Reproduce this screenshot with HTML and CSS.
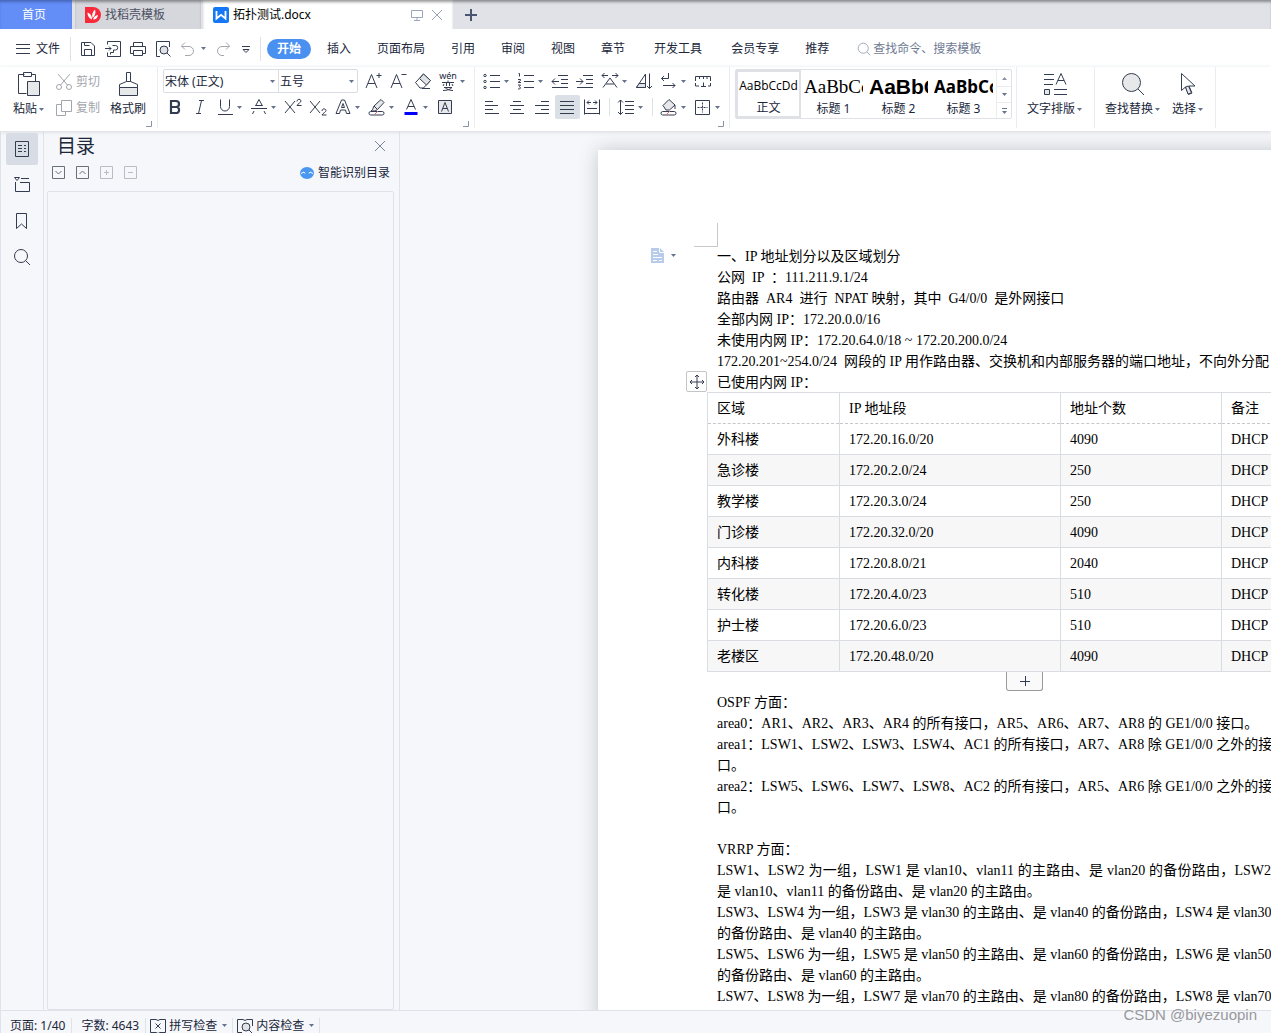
FILE: index.html
```html
<!DOCTYPE html>
<html lang="zh-CN">
<head>
<meta charset="utf-8">
<title>拓扑测试.docx</title>
<link rel="stylesheet" href="styles.css">
</head>
<body>
<svg class="sprite" aria-hidden="true">
  <symbol id="caret" viewBox="0 0 5 3"><path d="M0 0h5L2.500 3z" fill="#65728e"/></symbol>
  <symbol id="caret-up" viewBox="0 0 5 3"><path d="M0 3h5L2.500 0z" fill="#8a92a3"/></symbol>
  <symbol id="close" viewBox="0 0 12 12"><path d="M1 1l10 10M11 1L1 11"/></symbol>
  <symbol id="search" viewBox="0 0 18 18"><circle cx="8" cy="8" r="6.5"/><path d="M12.7 12.7L17 17"/></symbol>
  <symbol id="corner" viewBox="0 0 6 6"><path d="M5.500 0v5.500H0"/></symbol>
</svg>

<header class="tabs">
  <button class="tab tab-home">首页</button>
  <button class="tab tab-template">
    <svg class="i16" viewBox="0 0 16 16"><path d="M0 0h8a8 8 0 0 1 0 16H0z" fill="#f8293a"/><path d="M7 12.500C3.500 11 2.500 8.500 2.500 5.500 5.500 6.500 7 9 7 12.500zM7.500 11C6.500 7.500 7.800 4.500 10 2.500 11.200 6 10 9 7.500 11zM8 12.500c1-3 2.500-4 5-4.500-.5 3-2 4.500-5 4.500z" fill="#fff"/></svg>
    找稻壳模板
  </button>
  <div class="tab tab-doc">
    <svg class="i16" viewBox="0 0 16 16"><rect width="16" height="16" rx="2" fill="#1677f5"/><path d="M3.500 4v7.500L8 7.800l4.500 3.700V4" fill="none" stroke="#fff" stroke-width="1.800"/></svg>
    <span class="tab-name">拓扑测试.docx</span>
    <button class="bare" aria-label="窗口"><svg class="i12 pale" viewBox="0 0 12 12"><path d="M.5 1.500h11v7H.5zM6 8.500v3M3 11.500h6"/></svg></button>
    <button class="bare" aria-label="关闭"><svg class="i12 pale"><use href="#close"/></svg></button>
  </div>
  <button class="bare tab-add" aria-label="新建"><svg class="i12" viewBox="0 0 12 12"><path d="M6 0v12M0 6h12" stroke="#4a5572" stroke-width="2"/></svg></button>
</header>

<nav class="menu">
  <button class="bare file"><svg class="i14" viewBox="0 0 14 14"><path d="M0 2.500h14M0 6.500h14M0 11.500h14"/></svg>文件</button>
  <div class="quick">
    <button class="bare" aria-label="保存"><svg class="i16" viewBox="0 0 16 16"><path d="M1.500 14.500v-13h9.500l3.500 3.500v9.500zM4.500 14.500v-6h7v6M4.500 1.500v3h5"/></svg></button>
    <button class="bare" aria-label="输出为PDF"><svg class="i16" viewBox="0 0 16 16"><path d="M2.500 3.500v-3h13v15h-13v-4M0 7.500h6M4 5.500l2 2-2 2M7.500 4.500h3a2 2 0 0 1 0 4.500H8.500v2.500H5.500v2"/></svg></button>
    <button class="bare" aria-label="打印"><svg class="i16" viewBox="0 0 16 16"><path d="M3.500 5.500v-4h9v4M3.500 12.500h-3v-7h15v7h-3M3.500 9.500h9v5h-9z"/></svg></button>
    <button class="bare" aria-label="打印预览"><svg class="i16" viewBox="0 0 16 16"><path d="M5 15.500H1.500v-15h13V6"/><circle cx="9" cy="9" r="4" fill="#dfe3e6"/><path d="M12 12l3.500 3.500"/></svg></button>
    <button class="bare faded drop" aria-label="撤销"><svg class="i16" viewBox="0 0 16 16"><path d="M5 1.500L1.500 5 5 8.500M1.500 5.500H9a4.500 4.500 0 0 1 0 9H5"/></svg><svg class="caret"><use href="#caret"/></svg></button>
    <button class="bare faded" aria-label="恢复"><svg class="i16" viewBox="0 0 16 16"><path d="M11 1.500L14.500 5 11 8.500M14.500 5.500H7a4.500 4.500 0 0 0 0 9h2"/></svg></button>
    <button class="bare" aria-label="自定义"><svg class="i12" viewBox="0 0 12 12"><path d="M2 3.500h8M3 6.500l3 3 3-3z"/></svg></button>
  </div>
  <div class="menu-items">
    <button class="bare active">开始</button>
    <button class="bare">插入</button>
    <button class="bare">页面布局</button>
    <button class="bare">引用</button>
    <button class="bare">审阅</button>
    <button class="bare">视图</button>
    <button class="bare">章节</button>
    <button class="bare wide">开发工具</button>
    <button class="bare wide">会员专享</button>
    <button class="bare">推荐</button>
  </div>
  <button class="bare find"><svg class="i14"><use href="#search"/></svg>查找命令、搜索模板</button>
</nav>

<section class="ribbon">
  <div class="group clip">
    <button class="bare big"><svg class="i24" viewBox="0 0 24 24"><path d="M7.500 2.500h-6v19h8M14.500 2.500h4v7M6.500.5h8v4h-8z"/><path d="M10.500 9.500h12v14h-12z" fill="#e6e8ea"/></svg><span>粘贴<svg class="caret"><use href="#caret"/></svg></span></button>
    <div class="clip-pair">
      <button class="bare faded"><svg class="i16" viewBox="0 0 16 16"><path d="M2 0l9.500 11M14 0L4.500 11"/><circle cx="3" cy="13" r="2.500"/><circle cx="13" cy="13" r="2.500"/></svg>剪切</button>
      <button class="bare faded"><svg class="i16" viewBox="0 0 16 16"><path d="M5.500.5h10v11h-10zM5.500 4.500h-5v11h9v-4"/></svg>复制</button>
    </div>
    <button class="bare big"><svg class="i24" viewBox="0 0 24 24"><path d="M10.500.5h4v9h-4zM10.500 9.500l-7 3v3h18v-3l-7-3"/><path d="M3.500 15.500h18v8h-18z" fill="#e6e8ea"/></svg><span>格式刷</span></button>
    <svg class="corner"><use href="#corner"/></svg>
  </div>

  <div class="group font">
    <div class="row">
      <div class="combo">
        <label class="pick face"><select aria-label="字体"><option>宋体 (正文)</option></select><svg class="caret"><use href="#caret"/></svg></label>
        <label class="pick"><select aria-label="字号"><option>五号</option></select><svg class="caret"><use href="#caret"/></svg></label>
      </div>
      <button class="tool" aria-label="增大字号"><svg class="i18" viewBox="0 0 18 18"><path d="M2 16L7.500 2.500 13 16M4 11.500h7M12.500 3.500h5M15 1v5"/></svg></button>
      <button class="tool" aria-label="减小字号"><svg class="i18" viewBox="0 0 18 18"><path d="M2 16L7.500 2.500 13 16M4 11.500h7M12.500 2.500h5"/></svg></button>
      <button class="tool" aria-label="清除格式"><svg class="i18" viewBox="0 0 18 18"><path d="M1.500 10.500L9.500 2l7 6.500-7 7.500H6z"/><path d="M5.500 6.500l7 6.500 4-4.500-7-6.500z" fill="#dfe3e6"/><path d="M8 16.500h8"/></svg></button>
      <button class="tool drop" aria-label="拼音指南"><span class="pinyin"><span>wén</span><svg viewBox="0 0 14 11"><path d="M1 2.500h12M7 .5v2M5.500 3v3M8.500 3v3M3 4L2 6M11 4l1 2M3 7.500h8c-2 2-5 3-9 3M4 7.500c2 2 5 3 8 3"/></svg></span><svg class="caret"><use href="#caret"/></svg></button>
    </div>
    <div class="row">
      <button class="tool" aria-label="加粗"><svg class="i18" viewBox="0 0 18 18"><path d="M5 3h5a3 3 0 0 1 0 6H5zM5 9h6a3.200 3.200 0 0 1 0 6H5z" stroke-width="2.200"/></svg></button>
      <button class="tool" aria-label="倾斜"><svg class="i18" viewBox="0 0 18 18"><path d="M8 2.500h5M5 15.500h5M10.500 2.500l-3 13"/></svg></button>
      <button class="tool drop" aria-label="下划线"><svg class="i18" viewBox="0 0 18 18"><path d="M4.500 1.500v7a4.500 4.500 0 0 0 9 0v-7M2 16.500h15"/></svg><svg class="caret"><use href="#caret"/></svg></button>
      <button class="tool drop" aria-label="删除线"><svg class="i18" viewBox="0 0 18 18"><path d="M5.500 8L9 1.500 12.500 8M5.500 7.500h7M1 10.500h16M4 13l-1.500 3M14 13l1.500 3"/></svg><svg class="caret"><use href="#caret"/></svg></button>
      <button class="tool" aria-label="上标"><svg class="i18" viewBox="0 0 18 18"><path d="M1 3l10 12M11 3L1 15M13 3.500c0-3 4-2.500 4-.5 0 1.500-3 2.500-4 4.500h4.500"/></svg></button>
      <button class="tool" aria-label="下标"><svg class="i18" viewBox="0 0 18 18"><path d="M1 3l10 12M11 3L1 15M13 13c0-3 4-2.500 4-.5 0 1.500-3 2.500-4 4.500h4.500"/></svg></button>
      <button class="tool drop" aria-label="文字效果"><svg class="i18" viewBox="0 0 18 18"><path d="M2 15.500L7.500 2h3L16 15.500h-3.500L11.500 12h-5l-1 3.500zM7.500 9.500h3L9 5.500z"/></svg><svg class="caret"><use href="#caret"/></svg></button>
      <button class="tool drop" aria-label="突出显示"><svg class="i18" viewBox="0 0 18 18"><path d="M6 8l7-6.500 3 3L9.500 11.500zM6 8l-1.500 3.500L3 13h4l2.500-1.500" fill="#e6e8ea"/><rect x="1" y="13.500" width="15" height="3.500" rx="1.700"/><path d="M6 17l4-4" stroke="#e86a6a"/></svg><svg class="caret"><use href="#caret"/></svg></button>
      <button class="tool drop" aria-label="字体颜色"><svg class="i18" viewBox="0 0 18 18"><path d="M4.500 11.500L9 1.500l4.500 10M6 8.500h6"/><path d="M2.500 15.500h13" stroke="#00f" stroke-width="3"/></svg><svg class="caret"><use href="#caret"/></svg></button>
      <button class="tool" aria-label="字符底纹"><svg class="i18" viewBox="0 0 18 18"><path d="M2.500 2.500h13v13h-13z" fill="#e6e8ea"/><path d="M5.500 13.500L9 4.500l3.500 9M6.800 10.500h4.500"/></svg></button>
    </div>
    <svg class="corner"><use href="#corner"/></svg>
  </div>

  <div class="group para">
    <div class="row">
      <button class="tool drop" aria-label="项目符号"><svg class="i18" viewBox="0 0 18 18"><path d="M7 3.500h10M7 9.500h10M7 15.500h10"/><circle cx="2" cy="3.500" r="1.200"/><circle cx="2" cy="9.500" r="1.200"/><circle cx="2" cy="15.500" r="1.200"/></svg><svg class="caret"><use href="#caret"/></svg></button>
      <button class="tool drop" aria-label="编号"><svg class="i18" viewBox="0 0 18 18"><path d="M7 3.500h10M7 9.500h10M7 15.500h10M1.500 1.500h1v3M1 7.500h2.500v1L1 10.500h3M1 13h2.500l-1 1.500 1 1.500-1 1H1"/></svg><svg class="caret"><use href="#caret"/></svg></button>
      <button class="tool" aria-label="减少缩进"><svg class="i18" viewBox="0 0 18 18"><path d="M7 3.500h10M10 7.500h7M10 11.500h7M1 15.500h16M1 9.500h7M4 6.500l-3 3 3 3"/></svg></button>
      <button class="tool" aria-label="增加缩进"><svg class="i18" viewBox="0 0 18 18"><path d="M7 3.500h10M10 7.500h7M10 11.500h7M1 15.500h16M0 9.500h7M4 6.500l3 3-3 3"/></svg></button>
      <button class="tool drop" aria-label="中文版式"><svg class="i18" viewBox="0 0 18 18"><path d="M2 15.500L9 6l7 9.500M5 12h8M1 3.500h6M3.500 1L1 3.500 3.500 6M11 3.500h6M14.500 1L17 3.500 14.500 6"/></svg><svg class="caret"><use href="#caret"/></svg></button>
      <button class="tool" aria-label="排序"><svg class="i18" viewBox="0 0 18 18"><path d="M1.500 15.500L10.500 2v13.500z" fill="none"/><path d="M4 11.500h6.500v4H1.500z" fill="#dfe3e6"/><path d="M14.500 1.500v15M12 14l2.500 2.500L17 14"/></svg></button>
      <button class="tool drop" aria-label="段落标记"><svg class="i18" viewBox="0 0 18 18"><path d="M8.500 1v5.500H1.500M4 4L1.500 6.500 4 9M3 13.500h12M12.500 11l2.500 2.500-2.500 2.500"/></svg><svg class="caret"><use href="#caret"/></svg></button>
      <button class="tool" aria-label="制表位"><svg class="i18" viewBox="0 0 18 18"><path d="M1.500 9V4.500h15V9M5.500 4.500V7M9.500 4.500V7M13 4.500V7M1.500 11v3H5M9.500 10.500V14M7 14.500h5M16.500 11v3H14"/></svg></button>
    </div>
    <div class="row">
      <button class="tool" aria-label="左对齐"><svg class="i18" viewBox="0 0 18 18"><path d="M2 3.500h8M2 7.500h13M2 11.500h8M2 15.500h14"/></svg></button>
      <button class="tool" aria-label="居中"><svg class="i18" viewBox="0 0 18 18"><path d="M5 3.500h8M2 7.500h14M5 11.500h8M2 15.500h14"/></svg></button>
      <button class="tool" aria-label="右对齐"><svg class="i18" viewBox="0 0 18 18"><path d="M8 3.500h8M2 7.500h14M8 11.500h8M2 15.500h14"/></svg></button>
      <button class="tool pressed" aria-label="两端对齐"><svg class="i18" viewBox="0 0 18 18"><path d="M2 3.500h14M2 7.500h14M2 11.500h14M2 15.500h14"/></svg></button>
      <button class="tool" aria-label="分散对齐"><svg class="i18" viewBox="0 0 18 18"><path d="M1.500 1.500v15M16.500 1.500v15M4 4.500h4M6 2.500l-2 2 2 2M10 4.500h4M12 2.500l2 2-2 2M4 10.500h10M1.500 15.500h15"/></svg></button>
      <span class="rule"></span>
      <button class="tool drop" aria-label="行距"><svg class="i18" viewBox="0 0 18 18"><path d="M8 3.500h9M8 7.500h9M8 11.500h9M8 15.500h9M3.500 2v14.500M1 4.500L3.500 2 6 4.500M1 14l2.500 2.500L6 14"/></svg><svg class="caret"><use href="#caret"/></svg></button>
      <span class="rule"></span>
      <button class="tool drop" aria-label="底纹"><svg class="i18" viewBox="0 0 18 18"><path d="M3 7.500L9 1.500l6 5.500-5.500 5H6z" fill="#e6e8ea"/><path d="M15 7v4"/><rect x="1" y="13.500" width="15" height="3.500" rx="1.700"/><path d="M6 17l4-4" stroke="#e86a6a"/></svg><svg class="caret"><use href="#caret"/></svg></button>
      <button class="tool drop" aria-label="边框"><svg class="i18" viewBox="0 0 18 18"><path d="M1.500 2.500h14v14h-14z"/><path d="M8.500 4.500v10M3.500 9.500h10" stroke-dasharray="2 1"/></svg><svg class="caret"><use href="#caret"/></svg></button>
    </div>
    <svg class="corner"><use href="#corner"/></svg>
  </div>

  <div class="group styles">
    <div class="gallery">
      <button class="style chosen"><span class="sample s-body">AaBbCcDd</span>正文</button>
      <button class="style"><span class="sample s-h1">AaBbCc</span>标题 1</button>
      <button class="style"><span class="sample s-h2">AaBbC</span>标题 2</button>
      <button class="style"><span class="sample s-h3">AaBbCc</span>标题 3</button>
      <div class="scroll">
        <button class="bare" aria-label="上一行"><svg class="caret"><use href="#caret-up"/></svg></button>
        <button class="bare" aria-label="下一行"><svg class="caret"><use href="#caret"/></svg></button>
        <button class="bare" aria-label="更多样式"><svg class="more" viewBox="0 0 5 6"><path d="M0 .5h5" stroke="#65728e"/><path d="M0 3h5L2.500 6z" fill="#65728e" stroke="none"/></svg></button>
      </div>
    </div>
  </div>

  <div class="group tall">
    <button class="bare big"><svg class="i24" viewBox="0 0 24 24"><path d="M1 2.500h10M1 7.500h10M1 12.500h9M13 12.500L18 1.500l5 11M15 8.500h6M11 17.500h13M11 22.500h13"/><path d="M1.500 17.500h5v5h-5z" fill="#e6e8ea"/></svg><span>文字排版<svg class="caret"><use href="#caret"/></svg></span></button>
  </div>
  <div class="group tall">
    <button class="bare big"><svg class="i24" viewBox="0 0 24 24"><circle cx="10.500" cy="10.500" r="9" fill="#e6e8ea"/><path d="M17 17l6 6"/></svg><span>查找替换<svg class="caret"><use href="#caret"/></svg></span></button>
    <button class="bare big"><svg class="i24" viewBox="0 0 24 24"><path d="M5.500 1.500v17l4-3.500 3 7.500 3.500-1.500-3-7h6z"/><path d="M9.500 15l2.500 7 3.500-1.200-3-6.800z" fill="#e6e8ea"/></svg><span>选择<svg class="caret"><use href="#caret"/></svg></span></button>
  </div>
</section>

<main class="work">
  <aside class="rail">
    <button class="bare on" aria-label="目录"><svg class="i18" viewBox="0 0 18 18"><path d="M2.500 1.500h13v15h-13zM5 5.500h4M5 8.500h4M5 11.500h4M11 5.500h2M11 8.500h2M11 11.500h2"/></svg></button>
    <button class="bare" aria-label="章节"><svg class="i18" viewBox="0 0 18 18"><path d="M1.500 1.500h5L4 4.500zM8 2.500h8M2.500 6v9.500h14v-9H7"/></svg></button>
    <button class="bare" aria-label="书签"><svg class="i18" viewBox="0 0 18 18"><path d="M3.500 1.500h10v15l-5-4.500-5 4.500z"/></svg></button>
    <button class="bare" aria-label="查找"><svg class="i18"><use href="#search"/></svg></button>
  </aside>
  <aside class="panel">
    <div class="panel-head">
      <h2>目录</h2>
      <button class="bare" aria-label="关闭目录"><svg class="i12"><use href="#close"/></svg></button>
    </div>
    <div class="panel-tools">
      <button class="bare" aria-label="展开"><svg class="i14" viewBox="0 0 14 14"><path d="M.5.5h12v12H.5zM3.500 5l3 3 3-3"/></svg></button>
      <button class="bare" aria-label="收起"><svg class="i14" viewBox="0 0 14 14"><path d="M.5.5h12v12H.5zM3.500 8l3-3 3 3"/></svg></button>
      <button class="bare dim" aria-label="增加"><svg class="i14" viewBox="0 0 14 14"><path d="M.5.5h12v12H.5zM4 6.500h5M6.500 4v5"/></svg></button>
      <button class="bare dim" aria-label="减少"><svg class="i14" viewBox="0 0 14 14"><path d="M.5.5h12v12H.5zM4 6.500h5"/></svg></button>
      <button class="bare smart"><svg class="i14" viewBox="0 0 14 14"><ellipse cx="7" cy="7" rx="7" ry="6" fill="#4a97f2" stroke="none"/><path d="M1 7.500l3-1.500 1 1.500M13 7.500L10 6 9 7.500" stroke="#fff"/></svg>智能识别目录</button>
    </div>
    <div class="outline"></div>
  </aside>

  <div class="canvas">
    <article class="page">
      <span class="crop"></span>
      <button class="bare gutter" aria-label="段落布局"><svg class="i16" viewBox="0 0 16 16"><path d="M1 1h9l4 4v11H1z" fill="#b7cbea" stroke="none"/><path d="M9.500 1v4.500H14M3 4.500h4M3 7.500h5M3 10.500h9M3 13.500h4M9 13.500h3" stroke="#fff"/></svg><svg class="caret"><use href="#caret"/></svg></button>
      <p>一、IP 地址划分以及区域划分</p>
      <p>公网  IP  ：111.211.9.1/24</p>
      <p>路由器  AR4  进行  NPAT 映射，其中  G4/0/0  是外网接口</p>
      <p>全部内网 IP：172.20.0.0/16</p>
      <p>未使用内网 IP：172.20.64.0/18 ~ 172.20.200.0/24</p>
      <p>172.20.201~254.0/24  网段的 IP 用作路由器、交换机和内部服务器的端口地址，不向外分配</p>
      <p>已使用内网 IP：</p>
      <div class="sheet">
        <button class="bare move" aria-label="移动表格"><svg class="i16" viewBox="0 0 16 16"><path d="M8 1v14M1 8h14M6 3l2-2 2 2M6 13l2 2 2-2M3 6L1 8l2 2M13 6l2 2-2 2"/></svg></button>
        <table>
          <colgroup><col class="c1"><col class="c2"><col class="c3"><col class="c4"></colgroup>
          <thead><tr><th>区域</th><th>IP 地址段</th><th>地址个数</th><th>备注</th></tr></thead>
          <tbody>
            <tr><td>外科楼</td><td>172.20.16.0/20</td><td>4090</td><td>DHCP</td></tr>
            <tr><td>急诊楼</td><td>172.20.2.0/24</td><td>250</td><td>DHCP</td></tr>
            <tr><td>教学楼</td><td>172.20.3.0/24</td><td>250</td><td>DHCP</td></tr>
            <tr><td>门诊楼</td><td>172.20.32.0/20</td><td>4090</td><td>DHCP</td></tr>
            <tr><td>内科楼</td><td>172.20.8.0/21</td><td>2040</td><td>DHCP</td></tr>
            <tr><td>转化楼</td><td>172.20.4.0/23</td><td>510</td><td>DHCP</td></tr>
            <tr><td>护士楼</td><td>172.20.6.0/23</td><td>510</td><td>DHCP</td></tr>
            <tr><td>老楼区</td><td>172.20.48.0/20</td><td>4090</td><td>DHCP</td></tr>
          </tbody>
        </table>
        <button class="bare add-row" aria-label="添加行"><svg class="i12" viewBox="0 0 12 12"><path d="M6.500 1v10M1 6.500h10"/></svg></button>
      </div>
      <p>OSPF 方面：</p>
      <p>area0：AR1、AR2、AR3、AR4 的所有接口，AR5、AR6、AR7、AR8 的 GE1/0/0 接口。</p>
      <p class="full">area1：LSW1、LSW2、LSW3、LSW4、AC1 的所有接口，AR7、AR8 除 GE1/0/0 之外的接</p>
      <p>口。</p>
      <p class="full">area2：LSW5、LSW6、LSW7、LSW8、AC2 的所有接口，AR5、AR6 除 GE1/0/0 之外的接</p>
      <p>口。</p>
      <p>&nbsp;</p>
      <p>VRRP 方面：</p>
      <p class="full">LSW1、LSW2 为一组，LSW1 是 vlan10、vlan11 的主路由、是 vlan20 的备份路由，LSW2</p>
      <p>是 vlan10、vlan11 的备份路由、是 vlan20 的主路由。</p>
      <p class="full">LSW3、LSW4 为一组，LSW3 是 vlan30 的主路由、是 vlan40 的备份路由，LSW4 是 vlan30</p>
      <p>的备份路由、是 vlan40 的主路由。</p>
      <p class="full">LSW5、LSW6 为一组，LSW5 是 vlan50 的主路由、是 vlan60 的备份路由，LSW6 是 vlan50</p>
      <p>的备份路由、是 vlan60 的主路由。</p>
      <p class="full">LSW7、LSW8 为一组，LSW7 是 vlan70 的主路由、是 vlan80 的备份路由，LSW8 是 vlan70</p>
      <p>的备份路由、是 vlan80 的主路由。</p>
    </article>
  </div>
</main>

<footer class="status">
  <span class="cell">页面: 1/40</span>
  <span class="cell">字数: 4643</span>
  <button class="bare cell check"><svg class="i16" viewBox="0 0 16 16"><path d="M6 1.500H.5v13H6l2 1 2-1h5.500v-13H10l-2 1zM5.500 5.500l5 5M10.500 5.500l-5 5"/></svg>拼写检查<svg class="caret"><use href="#caret"/></svg></button>
  <button class="bare cell check"><svg class="i16" viewBox="0 0 16 16"><path d="M5 14.500H.5v-13H6l2 1 2-1h5.500V8"/><circle cx="9" cy="9" r="4" fill="#dfe3e6"/><path d="M12 12l3.500 3.500"/></svg>内容检查<svg class="caret"><use href="#caret"/></svg></button>
</footer>
<div class="watermark">CSDN @biyezuopin</div>
</body>
</html>
```

FILE: styles.css
```css
* { box-sizing: border-box; }

body {
  margin: 0;
  height: 100vh;
  display: flex;
  flex-direction: column;
  overflow: hidden;
  position: relative;
  background: #f6f7fa;
  color: #20263a;
  font: 12px/16px "Noto Sans", "Noto Sans CJK SC", sans-serif;
}

.sprite { position: absolute; width: 0; height: 0; }

svg { display: block; flex: none; fill: none; stroke: #333c50; overflow: visible; }
.i12 { width: 12px; height: 12px; }
.i14 { width: 14px; height: 14px; }
.i16 { width: 16px; height: 16px; }
.i18 { width: 18px; height: 18px; }
.i24 { width: 24px; height: 24px; }
.caret { width: 5px; height: 3px; stroke: none; }
.tab > .i16 { stroke: none; }
.pale { stroke: #9aa5bd; }

button { font: inherit; color: inherit; padding: 0; border: 0; background: none; white-space: nowrap; }
.bare { display: flex; align-items: center; justify-content: center; }
.faded { color: #a3a6ad; }
.faded .i16 { stroke: #a3a6ad; }

/* Document tabs */
.tabs {
  flex: none;
  display: flex;
  height: 29px;
  background: #e1e2e7;
  box-shadow: inset 0 3px 3px -1px #8b8c90;
}
.tab { display: flex; align-items: center; gap: 4px; }
.tab-home { width: 72px; justify-content: center; padding-right: 4px; background: #638ef8; color: #fff; box-shadow: inset 0 3px 3px -1px #4666ba; }
.tab-template { width: 126px; margin-left: 3px; padding-left: 10px; background: #d6d7dc; color: #4a5060; box-shadow: inset 0 3px 3px -1px #85868a; }
.tab-doc { width: 250px; margin-left: 2px; padding: 0 10px; background: #fff; color: #000; box-shadow: inset 0 3px 3px -1px #999; }
.tab-name { flex: 1; }
.tab-doc .bare { margin-left: 4px; }
.tab-add { width: 36px; }

/* Menu line */
.menu { flex: none; display: flex; align-items: center; height: 38px; padding: 1px 0 0 16px; background: #fff; }
.file { gap: 6px; padding-right: 10px; height: 24px; border-right: 1px solid #dfe1e6; }
.quick { display: flex; align-items: center; gap: 9px; height: 24px; padding: 0 8px 0 9px; border-right: 1px solid #dfe1e6; }
.quick .drop { gap: 5px; }
.menu-items { display: flex; align-items: center; gap: 26px; padding-left: 6px; }
.active { width: 44px; height: 20px; margin-right: -10px; border-radius: 10px; background: #4a90f0; color: #fff; font-weight: 700; }
.wide { margin-left: 3px; }
.find { margin-left: 28px; gap: 2px; color: #6f7a92; }
.find svg { stroke: #8d97ad; }

/* Ribbon */
.ribbon {
  flex: none;
  display: flex;
  height: 64px;
  background: #fff;
  box-shadow: 0 1px 4px #d5d8de;
  z-index: 1;
}
.group { position: relative; height: 61px; padding: 1px 4px 0 5px; border-right: 1px solid #ebecf0; }
.corner { position: absolute; right: 5px; bottom: 1px; width: 6px; height: 6px; stroke: #8a92a3; }
.clip { display: flex; width: 158px; padding-left: 13px; }
.big { flex-direction: column; justify-content: flex-start; gap: 5px; padding-top: 4px; }
.big span { display: flex; align-items: center; gap: 2px; }
.clip-pair { display: grid; grid-template-rows: 27px 26px; margin: 0 10px 0 12px; }
.clip-pair .bare { gap: 4px; }
.row { display: flex; align-items: center; height: 26px; }
.tool { display: flex; align-items: center; justify-content: center; width: 25px; height: 24px; padding-right: 1px; }
.tool.drop { width: 34px; justify-content: flex-start; gap: 3px; padding: 0 0 0 3px; }
.pressed { background: #dbe0e6; border-radius: 2px; }
.rule { width: 1px; height: 18px; margin: 0 4px; background: #dfe1e6; }
.combo { display: flex; width: 195px; height: 24px; margin-right: 3px; border: 1px solid #d9dce2; border-radius: 2px; }
.pick { position: relative; display: flex; align-items: center; flex: 1; padding-right: 3px; }
.pick select { flex: 1; min-width: 0; height: 22px; padding: 1px 1px 0; border: 0; appearance: none; background: none; font: inherit; color: inherit; }
.face { flex: none; width: 115px; border-right: 1px solid #d9dce2; }
.pinyin { width: 18px; font-size: 9px; line-height: 9px; text-align: center; }
.pinyin span { display: block; }
.pinyin svg { width: 14px; height: 11px; margin: 0 auto; }

.gallery { display: flex; width: 277px; height: 50px; margin-top: 1px; border: 1px solid #dfe1e6; border-radius: 2px; }
.style { display: flex; flex-direction: column; align-items: center; width: 65px; padding: 5px 3px 0; }
.chosen { border: 2px solid #dfe1e6; padding: 3px 0 0; }
.sample { width: 100%; height: 26px; overflow: hidden; line-height: 26px; text-align: left; color: #000; }
.s-body { font-family: "Open Sans", sans-serif; font-size: 12px; line-height: 22px; text-align: center; }
.s-h1 { font-family: "Liberation Serif", serif; font-size: 19px; line-height: 24px; }
.s-h2 { font-family: "Liberation Sans", sans-serif; font-size: 21px; line-height: 24px; font-weight: 700; }
.s-h3 { font-family: "Noto Sans", sans-serif; font-size: 17px; line-height: 24px; font-weight: 700; }
.scroll { flex: 1; display: grid; grid-template-rows: repeat(3, 1fr); border-left: 1px solid #ebecf0; }
.scroll .bare + .bare { border-top: 1px solid #ebecf0; }
.more { width: 5px; height: 6px; }
.tall { display: flex; gap: 12px; padding: 1px 12px 0 10px; }

/* Workspace */
.work { flex: 1; min-height: 0; display: flex; }
.rail { flex: none; width: 44px; padding: 2px 5px 0; border: solid #dfe2e8; border-width: 0 1px; }
.rail .bare { width: 32px; height: 32px; margin-bottom: 4px; border-radius: 2px; }
.rail .on { background: #d8dde5; }
.panel { flex: none; display: flex; flex-direction: column; width: 356px; padding: 0 5px 0 3px; border-right: 1px solid #dfe2e8; }
.panel-head { display: flex; justify-content: space-between; align-items: center; height: 30px; padding: 0 8px 0 10px; }
.panel-head .i12 { stroke: #7c879d; }
.panel h2 { margin: 0; font-size: 19px; line-height: 28px; font-weight: 400; }
.panel-tools { display: flex; align-items: center; gap: 10px; height: 24px; padding: 0 4px 0 5px; }
.panel-tools svg { stroke: #6a7078; }
.panel-tools .dim svg { stroke: #b9bcc2; }
.smart { margin-left: auto; gap: 4px; }
.outline { flex: 1; margin-top: 6px; border: 1px solid #dfe2e8; border-radius: 2px; }
.canvas { flex: 1; min-width: 0; padding: 19px 0 0 198px; overflow: hidden; }

/* Paper, A4 wide */
.page {
  position: relative;
  width: 794px;
  min-height: 1123px;
  padding: 96px 121px 96px 119px;
  background: #fff;
  color: #000;
  box-shadow: 0 0 18px #c4c7cc;
  font: 14px/21px "Liberation Serif", "Noto Sans CJK SC", serif;
}
.page p { margin: 0; height: 21px; white-space: pre; }
.page .full { text-align: justify; text-align-last: justify; white-space: nowrap; }
.crop { position: absolute; left: 96px; top: 73px; width: 24px; height: 24px; border: solid #c8c8c8; border-width: 0 1px 1px 0; }
.gutter { position: absolute; left: 52px; top: 97px; gap: 5px; }
.sheet { position: relative; margin: -1px -10px 20px; }
.move { position: absolute; left: -21px; top: -21px; width: 21px; height: 21px; border: 1px solid #c4c4c4; border-radius: 2px; background: #fff; }
.add-row { position: absolute; left: 299px; top: 280px; width: 37px; height: 19px; border: 1px solid #9a9a9a; border-top: 0; border-radius: 0 0 3px 3px; background: #fafafa; }
table { width: 100%; table-layout: fixed; border-collapse: collapse; }
.c1 { width: 132px; }
.c2 { width: 221px; }
.c3 { width: 161px; }
th, td { height: 31px; padding: 0 9px; border: 1px solid #d9dde2; font-weight: 400; text-align: left; line-height: 21px; }
th { border-bottom: 1px dashed #c4c8cd; }
tbody tr:first-child td { border-top: 1px dashed #c4c8cd; }
tbody tr:nth-child(even) { background: #f7f7f7; }

/* Status bar */
.status { flex: none; display: flex; align-items: center; height: 23px; padding: 7px 0 0; border-top: 1px solid #dfe2e8; border-left: 1px solid #dfe2e8; background: #f6f7fa; z-index: 1; }
.cell { height: 16px; padding: 0 6px 0 9px; border-right: 1px solid #dfe2e8; white-space: nowrap; }
.check { gap: 3px; padding: 0 5px 0 4px; }
.check .caret { margin: 0 0 0 2px; }
.watermark { position: absolute; right: 14px; bottom: 8px; z-index: 2; color: #97999d; font: 15px/20px "Liberation Sans", sans-serif; }
```
